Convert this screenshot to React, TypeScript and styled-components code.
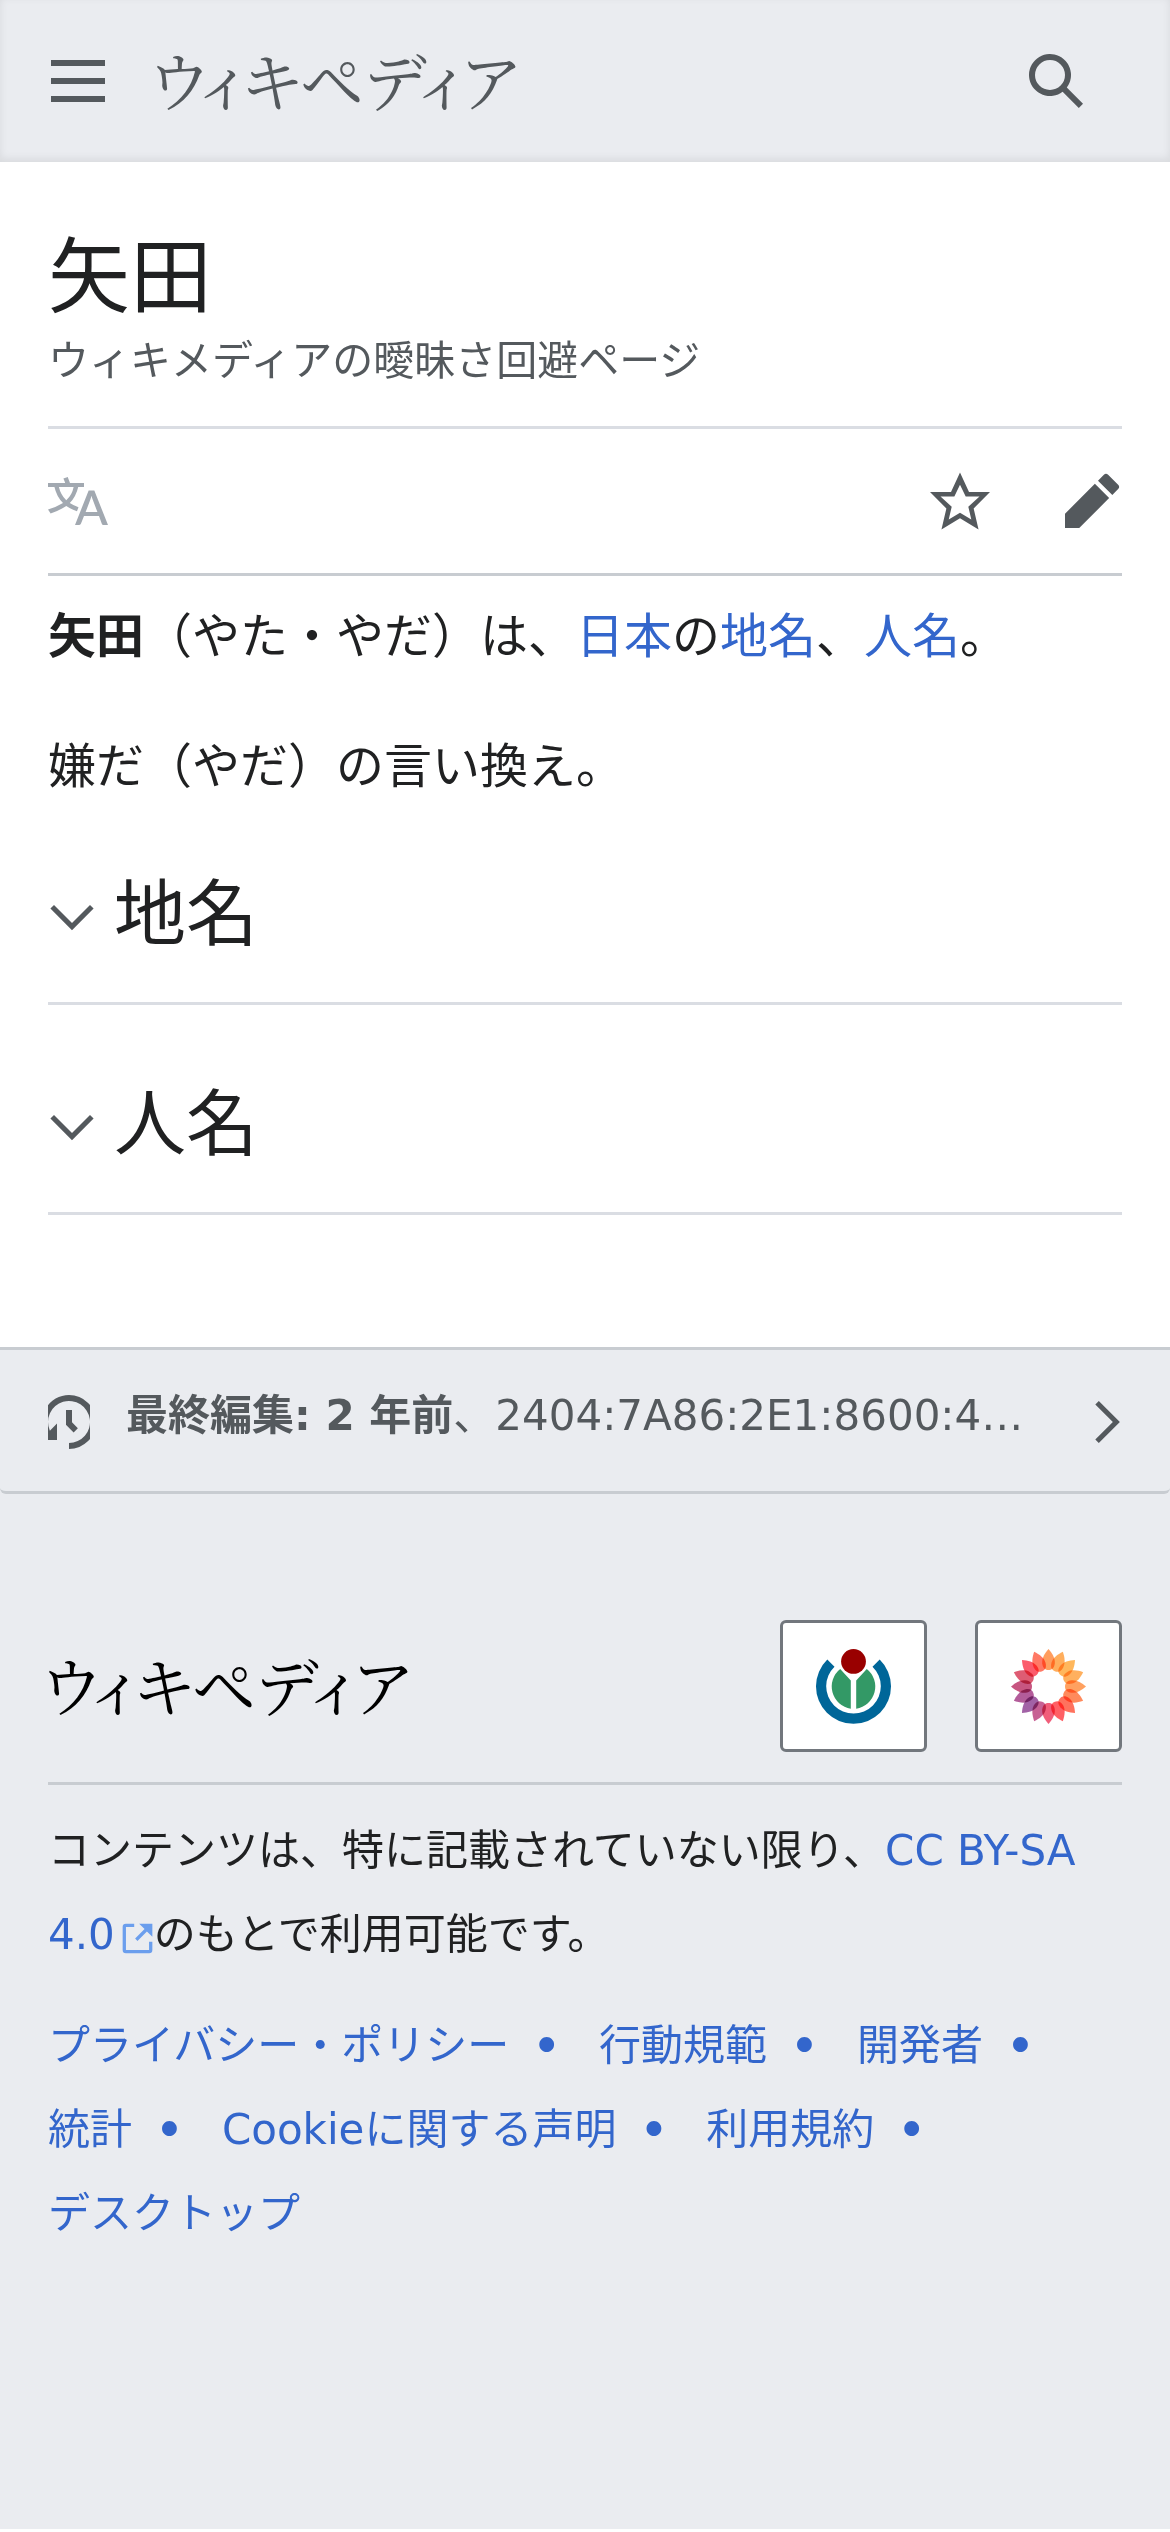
import React from "react";
import styled, { createGlobalStyle } from "styled-components";

const GlobalStyle = createGlobalStyle`
  * { box-sizing: border-box; }
  body {
    margin: 0;
    background: #fff;
    color: #202122;
    font-family: "DejaVu Sans", "Noto Sans CJK JP", sans-serif;
  }
  h1, h2, p, ul { margin: 0; padding: 0; font-weight: normal; }
`;

const IconButton = styled.button`
  display: flex;
  padding: 0;
  border: 0;
  background: none;
  color: #54595d;
  cursor: pointer;

  &:disabled { color: #a2a9b1; cursor: default; }
`;

const Svg = styled.svg<{ $w?: number; $h?: number }>`
  display: block;
  flex: none;
  width: ${(p) => p.$w ?? 60}px;
  height: ${(p) => p.$h ?? 60}px;
  fill: currentColor;
`;

const Link = styled.a`
  color: #36c;
  text-decoration: none;
`;

const Header = styled.header`
  display: flex;
  align-items: center;
  gap: 48px;
  padding: 51px 84px 51px 48px;
  background: #eaecf0;
  box-shadow: inset 0 -3px 9px rgba(0, 0, 0, 0.08);
`;

const Wordmark = styled.a<{ $color: string }>`
  margin: 0 auto 0 -6px;
  padding-bottom: 6px;
  color: ${(p) => p.$color};
  font-family: "Noto Serif CJK JP", "Noto Sans CJK JP", serif;
  font-size: 64px;
  font-weight: 400;
  line-height: 54px;
  font-feature-settings: "palt";
  text-decoration: none;
  white-space: nowrap;
`;

const Main = styled.main`
  padding: 0 48px 132px;
`;

const TitleBlock = styled.div`
  padding: 66px 0 34px;
  border-bottom: 3px solid #dadde3;
`;

const Title = styled.h1`
  font-size: 82px;
  line-height: 100px;
`;

const Tagline = styled.p`
  padding-top: 2px;
  color: #54595d;
  font-size: 41px;
  line-height: 62px;
`;

const Toolbar = styled.nav`
  display: flex;
  gap: 72px;
  padding: 42px 0;
  border-bottom: 3px solid #c8ccd1;

  & > :first-child { margin-right: auto; }
`;

const Lead = styled.div`
  display: flex;
  flex-direction: column;
  gap: 50px;
  padding-top: 20px;
  font-size: 48px;
  line-height: 80px;
`;

const Sections = styled.div`
  display: flex;
  flex-direction: column;
  gap: 11px;
`;

const SectionHeading = styled.h2`
  padding: 63px 0 43px;
  border-bottom: 3px solid #dadde3;
`;

const SectionToggle = styled(IconButton)`
  align-items: center;
  gap: 18px;
  width: 100%;
  font-family: inherit;
  font-size: 72px;
  line-height: 90px;
`;

const SectionTitle = styled.span`
  color: #202122;
`;

const LastEdited = styled.a`
  display: flex;
  gap: 36px;
  padding: 42px 48px 39px;
  border: 0 solid #c8ccd1;
  border-width: 3px 0;
  border-radius: 0 0 6px 6px;
  background: #eaecf0;
  color: #54595d;
  font-size: 42px;
  line-height: 48px;
  text-decoration: none;
`;

const EditedText = styled.span`
  flex: 1;
  overflow: hidden;
  text-overflow: ellipsis;
  white-space: nowrap;
`;

const FooterArea = styled.footer`
  background: #eaecf0;
`;

const FooterContent = styled.div`
  padding: 126px 48px 273px;
  font-size: 42px;
  line-height: 84px;
`;

const FooterTop = styled.div`
  display: flex;
  align-items: center;
  gap: 48px;
  padding-bottom: 30px;
  border-bottom: 3px solid #c8ccd1;
`;

const Badge = styled.a`
  display: flex;
  align-items: center;
  justify-content: center;
  width: 147px;
  height: 132px;
  border: 3px solid #72777d;
  border-radius: 6px;
  background: #fff;
`;

const License = styled.p`
  padding: 24px 0 27px;
`;

const ExternalIcon = styled(Svg)`
  display: inline-block;
  margin-left: 6px;
  vertical-align: -6px;
  color: #6b9eed;
`;

const LinkList = styled.ul`
  display: flex;
  flex-wrap: wrap;
  column-gap: 15px;
  list-style: none;
`;

const LinkItem = styled.li`
  color: #36c;

  &:not(:last-child)::after {
    content: "•";
    margin: 0 24px;
    font-weight: bold;
  }
`;

const CHEVRON = "m17.5 4.75-7.5 7.5-7.5-7.5L1 6.25l9 9 9-9z";

const PETALS = [
  "#ff9048", "#ffa347", "#ffad45", "#ffa548", "#ff944a", "#ff7a45", "#ff5f48", "#ff4a50",
  "#ef4868", "#bf4b85", "#954c9a", "#a8468c", "#bf3f70", "#d94560", "#fb4658", "#ff6650",
];

function WikimediaLogo() {
  return (
    <Svg $w={75} $h={75} viewBox="0 0 75 75" aria-hidden="true">
      <circle cx="37.5" cy="12.4" r="12.4" fill="#900" />
      <path fill="#396" d="M24.2 20 34.8 31.6V59.7A22.4 22.4 0 0 1 24.2 20zM50.8 20 40.2 31.6V59.7A22.4 22.4 0 0 0 50.8 20z" />
      <path fill="#069" d="M11.3 10.5 18.5 17.7A27.3 27.3 0 1 0 56.5 17.7L63.7 10.5A37.5 37.5 0 1 1 11.3 10.5z" />
    </Svg>
  );
}

function FlowerLogo() {
  return (
    <Svg $w={75} $h={75} viewBox="-37.5 -37.5 75 75" aria-hidden="true">
      {PETALS.map((color, i) => (
        <path
          key={color}
          fill={color}
          fillOpacity="0.88"
          style={{ mixBlendMode: "multiply" }}
          transform={`rotate(${i * 22.5})`}
          d="M0-37.5C4-33 6.8-28 6.3-23 5.600-18 3-16.500 0-16.500S-5.600-18-6.300-23C-6.800-28-4-33 0-37.500z"
        />
      ))}
    </Svg>
  );
}

function Section({ title }: { title: string }) {
  return (
    <SectionHeading>
      <SectionToggle type="button" aria-expanded="false">
        <Svg $w={48} $h={48} viewBox="0 -1.5 20 20" aria-hidden="true">
          <path d={CHEVRON} />
        </Svg>
        <SectionTitle>{title}</SectionTitle>
      </SectionToggle>
    </SectionHeading>
  );
}

const FOOTER_LINKS = [
  "プライバシー・ポリシー",
  "行動規範",
  "開発者",
  "統計",
  "Cookieに関する声明",
  "利用規約",
  "デスクトップ",
];

export default function App() {
  return (
    <div lang="ja">
      <GlobalStyle />
      <Header>
        <IconButton type="button" aria-label="メニュー">
          <Svg viewBox="0 0 20 20"><path d="M1 3v2h18V3zm0 8h18V9H1zm0 6h18v-2H1z" /></Svg>
        </IconButton>
        <Wordmark href="#" $color="#54595d">ウィキペディア</Wordmark>
        <IconButton type="button" aria-label="検索">
          <Svg viewBox="0 0 20 20">
            <path d="M12.2 13.6a7 7 0 1 1 1.4-1.4l5.4 5.4-1.4 1.4zM3 8a5 5 0 1 0 10 0A5 5 0 0 0 3 8" />
          </Svg>
        </IconButton>
      </Header>

      <Main>
        <TitleBlock>
          <Title>矢田</Title>
          <Tagline>ウィキメディアの曖昧さ回避ページ</Tagline>
        </TitleBlock>
        <Toolbar>
          <IconButton type="button" aria-label="言語" disabled>
            <Svg viewBox="0 0 20 20">
              <path d="M20 18h-1.44a.6.6 0 0 1-.4-.12.8.8 0 0 1-.23-.31L17 15h-5l-1 2.54a.8.8 0 0 1-.22.3.6.6 0 0 1-.4.14H9l4.55-11.47h1.89zm-3.53-4.31L14.89 9.5a12 12 0 0 1-.39-1.24q-.09.37-.19.69l-.19.56-1.58 4.19zm-6.3-1.58a13.4 13.4 0 0 1-2.91-1.41 11.46 11.46 0 0 0 2.81-5.37H12V4H7.31a4 4 0 0 0-.2-.56C6.87 2.79 6.6 2 6.6 2l-1.47.5s.4.89.6 1.5H0v1.33h2.15A11.23 11.23 0 0 0 5 10.7a17.2 17.2 0 0 1-5 2.1q.56.82.87 1.38a23.3 23.3 0 0 0 5.22-2.51 15.6 15.6 0 0 0 3.56 1.77zM3.63 5.33h4.91a8.1 8.1 0 0 1-2.45 4.45 9.1 9.1 0 0 1-2.46-4.45" />
            </Svg>
          </IconButton>
          <IconButton type="button" aria-label="ウォッチリストに追加">
            <Svg viewBox="0 0 20 20">
              <path d="M20 7h-7L10 .5 7 7H0l5.460 5.470-1.640 7 6.180-3.700 6.180 3.730-1.630-7zm-10 6.900-3.760 2.270 1-4.280L3.500 8.500h4.610L10 4.600l1.900 3.900h4.600l-3.730 3.400 1 4.280z" />
            </Svg>
          </IconButton>
          <IconButton type="button" aria-label="編集">
            <Svg viewBox="0 0 20 20">
              <path d="m16.77 8 1.94-2a1 1 0 0 0 0-1.41l-3.34-3.3a1 1 0 0 0-1.41 0L12 3.23zM1 14.25V19h4.75l9.96-9.96-4.75-4.75z" />
            </Svg>
          </IconButton>
        </Toolbar>
        <Lead>
          <p>
            <b>矢田</b>（やた・やだ）は、<Link href="#">日本</Link>の<Link href="#">地名</Link>、<Link href="#">人名</Link>。
          </p>
          <p>嫌だ（やだ）の言い換え。</p>
        </Lead>
        <Sections>
          <Section title="地名" />
          <Section title="人名" />
        </Sections>
      </Main>

      <FooterArea>
        <LastEdited href="#">
          <Svg $w={42} viewBox="3 0 14 20" aria-hidden="true">
            <path d="M9 6v5h.06l2.480 2.470 1.410-1.410L11 10.110V6z" />
            <path d="M10 1a9 9 0 0 0-7.850 13.350L.5 16H6v-5.500l-2.380 2.380A7 7 0 1 1 10 17v2a9 9 0 0 0 0-18" />
          </Svg>
          <EditedText>
            <b>最終編集: 2 年前</b>、2404:7A86:2E1:8600:4…
          </EditedText>
          <Svg $w={33} viewBox="3.8 0 11 20" aria-hidden="true">
            <path transform="translate(10 10) scale(.78) rotate(-90) translate(-10 -10)" d={CHEVRON} />
          </Svg>
        </LastEdited>
        <FooterContent>
          <FooterTop>
            <Wordmark href="#" $color="#000">ウィキペディア</Wordmark>
            <Badge href="#" aria-label="Wikimedia Foundation"><WikimediaLogo /></Badge>
            <Badge href="#" aria-label="Powered by MediaWiki"><FlowerLogo /></Badge>
          </FooterTop>
          <License>
            コンテンツは、特に記載されていない限り、<Link href="#">CC BY-SA 4.0<ExternalIcon $w={33} $h={33} viewBox="0 0 20 20" aria-hidden="true">
              <path d="M17 17H3V3h5V1H3a2 2 0 0 0-2 2v14a2 2 0 0 0 2 2h14a2 2 0 0 0 2-2v-5h-2z" />
              <path d="m11 1 3.290 3.290-5.730 5.730 1.420 1.420 5.730-5.730L19 9V1z" />
            </ExternalIcon></Link>のもとで利用可能です。
          </License>
          <LinkList>
            {FOOTER_LINKS.map((label) => (
              <LinkItem key={label}><Link href="#">{label}</Link></LinkItem>
            ))}
          </LinkList>
        </FooterContent>
      </FooterArea>
    </div>
  );
}
